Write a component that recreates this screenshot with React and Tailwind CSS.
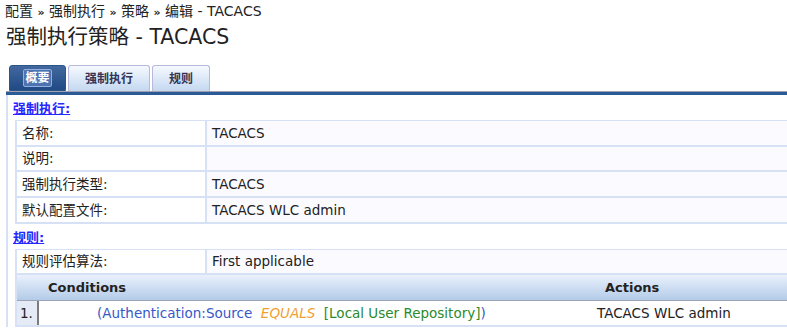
const rows = [
  { label: "名称:", value: "TACACS", h: "h-[26px]" },
  { label: "说明:", value: "", h: "h-[25px]" },
  { label: "强制执行类型:", value: "TACACS", h: "h-[26px]" },
  { label: "默认配置文件:", value: "TACACS WLC admin", h: "h-[26px]" },
];

const Tab = ({ label, active = false, width }) => (
  <div
    className={`h-[26px] ${width} flex items-center justify-center rounded-t-[3px] border text-[12px] font-bold ${
      active
        ? "border-[#2b5589] bg-gradient-to-b from-[#43689f] to-[#1f4a84] text-white"
        : "border-[#b9b9dc] border-b-0 bg-gradient-to-b from-[#f6f9ff] to-[#c4d8f0] text-[#333355]"
    }`}
  >
    {active ? (
      <span className="px-[1px] leading-[16px] border border-[#8fb0e0] rounded-[2px] bg-[#4d74b0]">
        {label}
      </span>
    ) : (
      label
    )}
  </div>
);

const SectionLink = ({ children }) => (
  <div className="h-[25px] flex items-center pt-[1px] -ml-[2px]">
    <a href="#" className="text-[#2626ff] font-bold underline text-[13px] leading-[15px]">
      {children}
    </a>
  </div>
);

const KeyValue = ({ label, value, h = "h-[26px]" }) => (
  <div className={`flex ${h} border-b-2 border-[#d6e1f6]`}>
    <div className="w-[190px] shrink-0 border-r-2 border-[#d6e1f6] bg-white pl-[5px] flex items-center">
      {label}
    </div>
    <div className="flex-1 bg-[#fbfbff] pl-[5px] flex items-center">{value}</div>
  </div>
);

export default function App() {
  return (
    <div
      className="w-[787px] h-[330px] overflow-hidden bg-white text-[13.5px] text-[#222]"
      style={{ fontFamily: '"DejaVu Sans", "Noto Sans CJK SC", sans-serif' }}
    >
      <div className="pl-[5px] pt-[2px] h-[22px] leading-[18px] text-[14px] text-[#222]">
        配置 <span className="text-[11px] font-bold">»</span> 强制执行{" "}
        <span className="text-[11px] font-bold">»</span> 策略{" "}
        <span className="text-[11px] font-bold">»</span> 编辑 - TACACS
      </div>
      <div className="pl-[6px] h-[43px] text-[20.5px] leading-[30px] text-[#222]">
        强制执行策略 - TACACS
      </div>

      <div className="flex items-end gap-[2px] pl-[9px] h-[26px]">
        <Tab label="概要" active width="w-[57px]" />
        <Tab label="强制执行" width="w-[82px]" />
        <Tab label="规则" width="w-[58px]" />
      </div>
      <div className="ml-[6px] h-[4px] border-t border-[#a0a0b0] bg-[#2b5b96]" />

      <div className="ml-[6px] border-l-2 border-[#d6e1f6] pl-[7px] w-[820px]">
        <SectionLink>强制执行:</SectionLink>
        <div className="border-l-2 border-t border-[#d6e1f6]">
          {rows.map((r) => (
            <KeyValue key={r.label} label={r.label} value={r.value} h={r.h} />
          ))}
        </div>

        <SectionLink>规则:</SectionLink>
        <div className="border-l-2 border-t border-[#d6e1f6]">
          <KeyValue label="规则评估算法:" value="First applicable" h="h-[25px]" />
          <div className="flex h-[26px] bg-gradient-to-b from-[#eaf1fc] to-[#b3cbe8] border-b border-[#9aa4b4] font-bold text-[13px] text-[#222]">
            <div className="w-[580px] pl-[31px] flex items-center">Conditions</div>
            <div className="flex-1 pl-[8px] flex items-center">Actions</div>
          </div>
          <div className="flex h-[26px] border-b-2 border-[#d6e1f6]">
            <div className="w-[22px] shrink-0 bg-[#e4ebf6] border-r-2 border-[#7c7c7c] pl-[3px] flex items-center">
              1.
            </div>
            <div className="w-[558px] pl-[58px] flex items-center whitespace-pre bg-white">
              <span className="text-[#3658c8]">(Authentication:Source </span>
              <span className="italic text-[#f0a030]"> EQUALS </span>
              <span className="text-[#2a8a2a]"> [Local User Repository]</span>
              <span className="text-[#3658c8]">)</span>
            </div>
            <div className="flex-1 bg-white flex items-center">TACACS WLC admin</div>
          </div>
        </div>
      </div>
    </div>
  );
}
